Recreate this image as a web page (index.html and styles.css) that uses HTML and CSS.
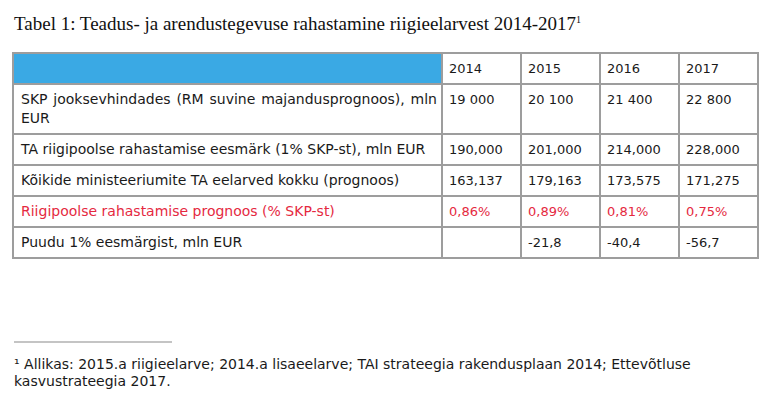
FILE: index.html
```html
<!DOCTYPE html>
<html lang="et">
<head>
<meta charset="utf-8">
<title>Tabel 1</title>
<link rel="stylesheet" href="styles.css">
</head>
<body>
<div class="page">
  <p class="caption">Tabel 1: Teadus- ja arendustegevuse rahastamine riigieelarvest 2014-2017<sup class="caption-ref">1</sup></p>
  <table class="data">
    <colgroup>
      <col class="c-label"><col class="c-year"><col class="c-year"><col class="c-year"><col class="c-year">
    </colgroup>
    <thead>
      <tr class="head">
        <th class="blue"></th><th>2014</th><th>2015</th><th>2016</th><th>2017</th>
      </tr>
    </thead>
    <tbody>
      <tr>
        <td class="label justify">SKP jooksevhindades (RM suvine majandusprognoos), mln EUR</td><td>19 000</td><td>20 100</td><td>21 400</td><td>22 800</td>
      </tr>
      <tr>
        <td class="label">TA riigipoolse rahastamise eesmärk (1% SKP-st), mln EUR</td><td>190,000</td><td>201,000</td><td>214,000</td><td>228,000</td>
      </tr>
      <tr>
        <td class="label">Kõikide ministeeriumite TA eelarved kokku (prognoos)</td><td>163,137</td><td>179,163</td><td>173,575</td><td>171,275</td>
      </tr>
      <tr class="red">
        <td class="label">Riigipoolse rahastamise prognoos (% SKP-st)</td><td>0,86%</td><td>0,89%</td><td>0,81%</td><td>0,75%</td>
      </tr>
      <tr>
        <td class="label">Puudu 1% eesmärgist, mln EUR</td><td></td><td>-21,8</td><td>-40,4</td><td>-56,7</td>
      </tr>
    </tbody>
  </table>
  <div class="notes">
    <hr class="rule">
    <p class="note">¹ Allikas: 2015.a riigieelarve; 2014.a lisaeelarve; TAI strateegia rakendusplaan 2014; Ettevõtluse kasvustrateegia 2017.</p>
  </div>
</div>
</body>
</html>
```
FILE: styles.css
```css
html, body {
  margin: 0;
  padding: 0;
  background: #ffffff;
}
.page {
  padding: 12px 0 0 14px;
  width: 744px;
  font-family: "DejaVu Sans", Verdana, sans-serif;
  color: #1a1a1a;
}
.caption {
  margin: 0;
  font-family: "Liberation Serif", "Times New Roman", serif;
  font-size: 19px;
  line-height: 24px;
  color: #111;
}
.caption-ref {
  font-size: 10px;
  vertical-align: 7px;
  line-height: 0;
}
.data {
  margin: 16px 0 0 -2px;
  border-collapse: collapse;
  width: 745px;
  font-size: 13px;
  line-height: 19px;
  table-layout: fixed;
}
.c-label { width: 429px; }
.c-year { width: 79px; }
.data th, .data td {
  border: 2px solid #9d9d9d;
  padding: 5px 6px 5px 6px;
  text-align: left;
  vertical-align: top;
  font-weight: normal;
}
.head th {
  height: 18px;
}
.blue {
  background: #3aa9e4;
}
.data td.label {
  font-size: 14px;
  padding-left: 7px;
  padding-right: 4px;
}
.data td.justify {
  text-align: justify;
}
.red td {
  color: #e5293f;
}
.notes {
  margin-top: 82px;
}
.rule {
  margin: 0;
  width: 158px;
  border: 0;
  border-top: 2px solid #c4c4c4;
}
.note {
  margin: 13px 0 0 0;
  width: 700px;
  font-size: 14px;
  line-height: 17px;
}
```
